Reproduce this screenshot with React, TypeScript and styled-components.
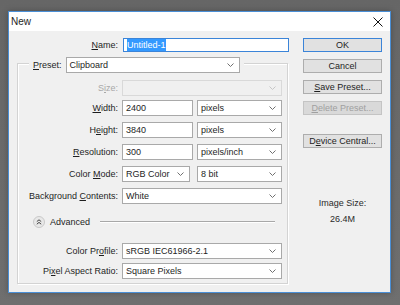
import styled, { createGlobalStyle } from "styled-components";

const GlobalStyle = createGlobalStyle`
  html, body {
    margin: 0;
    padding: 0;
    background: #6d6d6d;
    font-family: "Liberation Sans", Arial, sans-serif;
    font-size: 9px;
    color: #1e1e1e;
  }
`;

const Page = styled.div`
  width: 400px;
  height: 305px;
  padding: 11px 0 0 8px;
  box-sizing: border-box;
  background: linear-gradient(#666 0%, #6f6f6f 100%);
`;

const Dialog = styled.div`
  width: 383px;
  height: 282px;
  box-sizing: border-box;
  border: 1px solid #4a8fd6;
  background: #f0f0f0;
  display: flex;
  flex-direction: column;
  box-shadow: 0 0 6px rgba(0, 0, 0, 0.25);
`;

const TitleBar = styled.div`
  height: 19px;
  background: #fff;
  display: flex;
  align-items: center;
  justify-content: space-between;
  padding: 0 7px 0 2px;
  font-size: 10px;
`;

const Body = styled.div`
  display: flex;
  gap: 13px;
  padding: 7px 0 0 8px;
`;

const LeftCol = styled.div`
  width: 273px;
  display: flex;
  flex-direction: column;
`;

const RightCol = styled.div`
  width: 79px;
  display: flex;
  flex-direction: column;
  align-items: stretch;
`;

const NameRow = styled.div`
  display: grid;
  grid-template-columns: 101px 166px;
  column-gap: 5px;
  height: 14px;
  align-items: center;
`;

const Label = styled.label<{ $disabled?: boolean }>`
  text-align: right;
  white-space: nowrap;
  color: ${(p) => (p.$disabled ? "#a8a8a8" : "#1e1e1e")};
`;

const TextBox = styled.div<{ $focus?: boolean }>`
  height: 100%;
  box-sizing: border-box;
  background: #fff;
  border: 1px solid ${(p) => (p.$focus ? "#3b84d8" : "#a9a9a9")};
  display: flex;
  align-items: center;
  padding: 0 3px;
`;

const Selected = styled.span`
  background: #3399ff;
  color: #fff;
  padding: 1px 0;
`;

const Group = styled.div`
  margin-top: 11px;
  width: 271px;
  height: 221px;
  box-sizing: border-box;
  border: 1px solid #d3d3d3;
  box-shadow: inset 1px 1px 0 #fff, 1px 1px 0 #fff;
  display: flex;
  flex-direction: column;
`;

const Legend = styled.div`
  margin: -7px 0 0 11px;
  align-self: flex-start;
  display: flex;
  align-items: center;
  gap: 4px;
  padding: 0 4px;
  height: 16px;
  background: #f0f0f0;
`;

const Rows = styled.div<{ $top: number; $gap: number }>`
  margin-top: ${(p) => p.$top}px;
  display: flex;
  flex-direction: column;
  gap: ${(p) => p.$gap}px;
`;

const Row = styled.div<{ $pull?: number }>`
  display: grid;
  grid-template-columns: 100px 160px;
  column-gap: 4px;
  height: 16px;
  align-items: center;
  margin-bottom: ${(p) => (p.$pull ? -p.$pull : 0)}px;
`;

const Pair = styled.div<{ $cols: string; $gap: number }>`
  display: grid;
  grid-template-columns: ${(p) => p.$cols};
  column-gap: ${(p) => p.$gap}px;
  height: 16px;
`;

const SelectBox = styled.div<{ $w?: number; $disabled?: boolean }>`
  ${(p) => (p.$w ? `width: ${p.$w}px;` : "")}
  height: 16px;
  box-sizing: border-box;
  background: ${(p) => (p.$disabled ? "#f0f0f0" : "#fff")};
  border: 1px solid ${(p) => (p.$disabled ? "#d9d9d9" : "#a9a9a9")};
  display: flex;
  align-items: center;
  justify-content: space-between;
  padding: 0 5px 0 3px;
  white-space: nowrap;
  color: ${(p) => (p.$disabled ? "#b0b0b0" : "#1e1e1e")};
`;

const AdvancedRow = styled.div`
  margin-top: 12px;
  height: 12px;
  display: flex;
  align-items: center;
  padding: 0 12px 0 15px;
  gap: 5px;
`;

const RoundIcon = styled.span`
  width: 10px;
  height: 10px;
  border-radius: 50%;
  border: 1px solid #c9c9c9;
  background: #e8e8e8;
  display: flex;
  align-items: center;
  justify-content: center;
`;

const Rule = styled.span`
  flex: 1;
  margin-left: 5px;
  height: 0;
  border-top: 1px solid #a8a8a8;
  border-bottom: 1px solid #fff;
`;

const Button = styled.div<{ $primary?: boolean; $disabled?: boolean; $top?: number }>`
  height: 14px;
  box-sizing: border-box;
  margin-top: ${(p) => p.$top ?? 0}px;
  background: ${(p) => (p.$disabled ? "#d9d9d9" : "#e1e1e1")};
  border: 1px solid
    ${(p) => (p.$primary ? "#3b84d8" : p.$disabled ? "#c4c4c4" : "#adadad")};
  color: ${(p) => (p.$disabled ? "#a0a0a0" : "#1e1e1e")};
  display: flex;
  align-items: center;
  justify-content: center;
  white-space: nowrap;
`;

const Info = styled.div<{ $top: number }>`
  margin-top: ${(p) => p.$top}px;
  text-align: center;
  color: #2a2a2a;
`;

function Chevron({ light }: { light?: boolean }) {
  return (
    <svg width="7" height="4" viewBox="0 0 7 4">
      <path
        d="M0.5 0.5 L3.5 3.5 L6.5 0.5"
        fill="none"
        stroke={light ? "#c6c6c6" : "#707070"}
        strokeWidth="1"
      />
    </svg>
  );
}

function Select({
  value,
  w,
  disabled,
}: {
  value: string;
  w?: number;
  disabled?: boolean;
}) {
  return (
    <SelectBox $w={w} $disabled={disabled}>
      <span>{value}</span>
      <Chevron light={disabled} />
    </SelectBox>
  );
}

export default function App() {
  return (
    <Page>
      <GlobalStyle />
      <Dialog>
        <TitleBar>
          <span>New</span>
          <svg width="10" height="10" viewBox="0 0 10 10">
            <path d="M0.5 0.5 L9.5 9.5 M9.5 0.5 L0.5 9.5" stroke="#111" strokeWidth="1" />
          </svg>
        </TitleBar>
        <Body>
          <LeftCol>
            <NameRow>
              <Label>
                <u>N</u>ame:
              </Label>
              <TextBox $focus>
                <Selected>Untitled-1</Selected>
              </TextBox>
            </NameRow>
            <Group>
              <Legend>
                <Label>
                  <u>P</u>reset:
                </Label>
                <Select value="Clipboard" w={174} />
              </Legend>
              <Rows $top={7} $gap={6}>
                <Row $pull={2}>
                  <Label $disabled>
                    S<u>i</u>ze:
                  </Label>
                  <Select value="" disabled />
                </Row>
                <Row>
                  <Label>
                    <u>W</u>idth:
                  </Label>
                  <Pair $cols="71px 85px" $gap={4}>
                    <TextBox>2400</TextBox>
                    <Select value="pixels" />
                  </Pair>
                </Row>
                <Row>
                  <Label>
                    H<u>e</u>ight:
                  </Label>
                  <Pair $cols="71px 85px" $gap={4}>
                    <TextBox>3840</TextBox>
                    <Select value="pixels" />
                  </Pair>
                </Row>
                <Row>
                  <Label>
                    <u>R</u>esolution:
                  </Label>
                  <Pair $cols="71px 85px" $gap={4}>
                    <TextBox>300</TextBox>
                    <Select value="pixels/inch" />
                  </Pair>
                </Row>
                <Row>
                  <Label>
                    Color <u>M</u>ode:
                  </Label>
                  <Pair $cols="68px 85px" $gap={7}>
                    <Select value="RGB Color" />
                    <Select value="8 bit" />
                  </Pair>
                </Row>
                <Row>
                  <Label>
                    Background <u>C</u>ontents:
                  </Label>
                  <Select value="White" />
                </Row>
              </Rows>
              <AdvancedRow>
                <RoundIcon>
                  <svg width="6" height="6" viewBox="0 0 6 6">
                    <path
                      d="M0.8 2.6 L3 0.8 L5.2 2.6 M0.8 5.2 L3 3.4 L5.2 5.2"
                      fill="none"
                      stroke="#444"
                      strokeWidth="1"
                    />
                  </svg>
                </RoundIcon>
                <span>Advanced</span>
                <Rule />
              </AdvancedRow>
              <Rows $top={15} $gap={4}>
                <Row>
                  <Label>
                    Color Pr<u>o</u>file:
                  </Label>
                  <Select value="sRGB IEC61966-2.1" />
                </Row>
                <Row>
                  <Label>
                    Pi<u>x</u>el Aspect Ratio:
                  </Label>
                  <Select value="Square Pixels" />
                </Row>
              </Rows>
            </Group>
          </LeftCol>
          <RightCol>
            <Button $primary>OK</Button>
            <Button $top={7}>Cancel</Button>
            <Button $top={7}>
              <u>S</u>ave Preset...
            </Button>
            <Button $top={7} $disabled>
              <u>D</u>elete Preset...
            </Button>
            <Button $top={19}>
              D<u>e</u>vice Central...
            </Button>
            <Info $top={50}>Image Size:</Info>
            <Info $top={6}>26.4M</Info>
          </RightCol>
        </Body>
      </Dialog>
    </Page>
  );
}
